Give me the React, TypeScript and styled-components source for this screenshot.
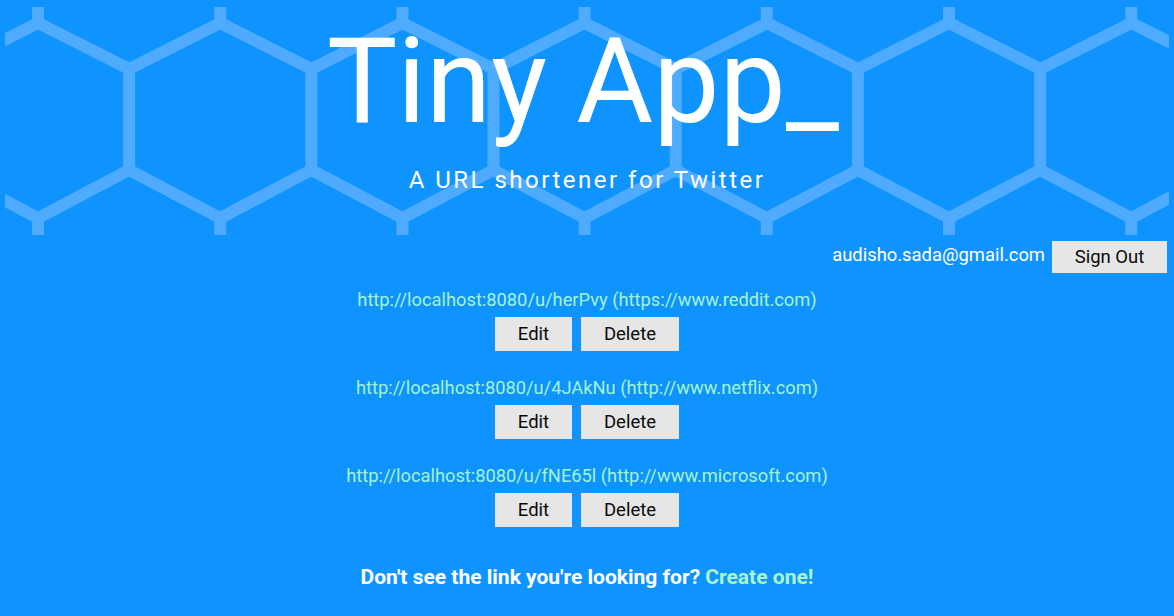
import React from "react";
import styled, { createGlobalStyle } from "styled-components";

const GlobalStyle = createGlobalStyle`
  html, body {
    margin: 0;
    padding: 0;
    background: #0f93ff;
  }
  body {
    font-family: Roboto, "Liberation Sans", Arial, sans-serif;
    color: #ffffff;
  }
`;

const Page = styled.div`
  min-height: 616px;
  background: #0f93ff;
  padding: 7px 5px 0;
  box-sizing: border-box;
  display: flex;
  flex-direction: column;
`;

const Header = styled.header`
  position: relative;
  height: 228px;
  overflow: hidden;
  display: flex;
  flex-direction: column;
  align-items: center;
`;

const Pattern = styled.svg`
  position: absolute;
  inset: 0;
  width: 100%;
  height: 100%;
`;

const Title = styled.h1`
  position: relative;
  margin: 16px 0 0 -8px;
  font-family: Roboto, "Liberation Sans", sans-serif;
  font-weight: 400;
  font-size: 118px;
  line-height: 118px;
  letter-spacing: 0;
  color: #ffffff;
`;

const Subtitle = styled.p`
  position: relative;
  margin: 25px 0 0;
  font-family: Roboto, "Liberation Sans", sans-serif;
  font-weight: 400;
  font-size: 24px;
  line-height: 28px;
  letter-spacing: 2.5px;
  color: #ffffff;
`;

const UserBar = styled.div`
  display: flex;
  justify-content: flex-end;
  align-items: center;
  gap: 7px;
  margin-top: 6px;
  padding-right: 2px;
`;

const Email = styled.span`
  font-size: 18.4px;
  line-height: 24px;
  color: #ffffff;
  margin-top: -4px;
`;

const Button = styled.button<{ $w: number; $h?: number }>`
  font-family: Roboto, "Liberation Sans", sans-serif;
  font-size: 18.5px;
  height: ${(p) => (p.$h ? p.$h : 34)}px;
  width: ${(p) => p.$w}px;
  padding: 0;
  border: none;
  border-radius: 0;
  background: #e6e6e6;
  color: #0a0a0a;
  cursor: pointer;
`;

const List = styled.ul`
  list-style: none;
  margin: 15px 0 0;
  padding: 0;
  display: flex;
  flex-direction: column;
  align-items: center;
  gap: 25px;
`;

const Item = styled.li`
  display: flex;
  flex-direction: column;
  align-items: center;
  gap: 5px;
`;

const LinkText = styled.a`
  font-size: 18.3px;
  line-height: 24px;
  color: #a2f3cf;
  text-decoration: none;
`;

const Actions = styled.div`
  display: flex;
  gap: 9px;
`;

const Footer = styled.p`
  margin: 36px 0 0;
  text-align: center;
  font-size: 21px;
  line-height: 28px;
  font-weight: 700;
  color: #ffffff;
`;

const CreateLink = styled.a`
  color: #a8f7c4;
  text-decoration: none;
`;

const PERIOD = 182.2;

function HexPattern() {
  const paths: string[] = [];
  for (let k = -1; k < 8; k++) {
    const cx = 33 + PERIOD * k;
    const l = cx - PERIOD / 2;
    const r = cx + PERIOD / 2;
    paths.push(`M${cx} -2 L${cx} 16 M${l} 62 L${cx} 16 L${r} 62 L${r} 163 L${cx} 211 L${l} 163 M${cx} 211 L${cx} 230`);
  }
  return (
    <Pattern viewBox="0 0 1164 228" preserveAspectRatio="none" aria-hidden="true">
      {paths.map((d, i) => (
        <path key={i} d={d} fill="none" stroke="#4eabff" strokeWidth={12} strokeLinejoin="miter" />
      ))}
    </Pattern>
  );
}

const links = [
  { short: "herPvy", long: "https://www.reddit.com" },
  { short: "4JAkNu", long: "http://www.netflix.com" },
  { short: "fNE65l", long: "http://www.microsoft.com" },
];

export default function App() {
  return (
    <>
      <GlobalStyle />
      <Page>
        <Header>
          <HexPattern />
          <Title>Tiny App_</Title>
          <Subtitle>A URL shortener for Twitter</Subtitle>
        </Header>
        <UserBar>
          <Email>audisho.sada@gmail.com</Email>
          <Button $w={115} $h={32}>Sign Out</Button>
        </UserBar>
        <List>
          {links.map((l) => (
            <Item key={l.short}>
              <LinkText href="#">
                http://localhost:8080/u/{l.short} ({l.long})
              </LinkText>
              <Actions>
                <Button $w={77}>Edit</Button>
                <Button $w={98}>Delete</Button>
              </Actions>
            </Item>
          ))}
        </List>
        <Footer>
          Don't see the link you're looking for? <CreateLink href="#">Create one!</CreateLink>
        </Footer>
      </Page>
    </>
  );
}
